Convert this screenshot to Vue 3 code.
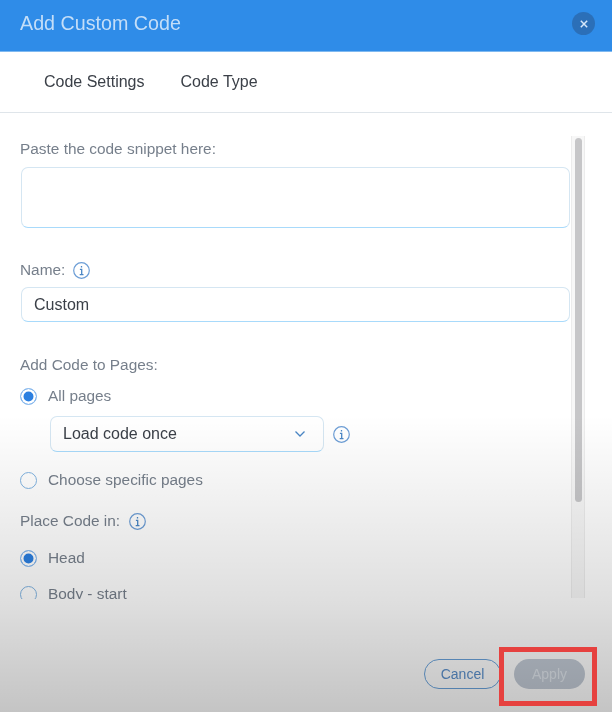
<script setup>
const infoPath = 'M8.5 3.9v1.7M6.9 7.4h1.8v5M6.7 12.6h3.8'
</script>

<template>
  <div class="dialog">
    <header class="head">
      <h1>Add Custom Code</h1>
      <button class="close" aria-label="Close">
        <svg width="10" height="10" viewBox="0 0 10 10"><path d="M1.800 1.800l6.400 6.400M8.200 1.800l-6.400 6.400" stroke="#d5e7fa" stroke-width="1.500" fill="none" /></svg>
      </button>
    </header>
    <nav class="tabs">
      <span>Code Settings</span>
      <span>Code Type</span>
    </nav>
    <div class="main">
      <div class="form">
        <label class="lbl first">Paste the code snippet here:</label>
        <div class="field area"></div>

        <div class="lbl name-lbl">
          Name:
          <svg class="info" viewBox="0 0 17 17"><circle cx="8.500" cy="8.500" r="7.800" /><path :d="infoPath" /></svg>
        </div>
        <div class="field input">Custom</div>

        <div class="lbl pages-lbl">Add Code to Pages:</div>
        <div class="radio-row all"><i class="radio on"></i>All pages</div>
        <div class="select-row">
          <div class="field select">
            Load code once
            <svg width="12" height="8" viewBox="0 0 12 8"><path d="M1.500 1.500L6 6l4.500-4.500" stroke="#4a86c5" stroke-width="1.300" fill="none" /></svg>
          </div>
          <svg class="info" viewBox="0 0 17 17"><circle cx="8.500" cy="8.500" r="7.800" /><path :d="infoPath" /></svg>
        </div>
        <div class="radio-row specific"><i class="radio"></i>Choose specific pages</div>

        <div class="lbl place-lbl">
          Place Code in:
          <svg class="info" viewBox="0 0 17 17"><circle cx="8.500" cy="8.500" r="7.800" /><path :d="infoPath" /></svg>
        </div>
        <div class="radio-row head-row"><i class="radio on"></i>Head</div>
        <div class="radio-row body-row"><i class="radio"></i>Body - start</div>
      </div>
      <div class="track"><div class="thumb"></div></div>
    </div>
    <footer class="foot">
      <button class="btn cancel">Cancel</button>
      <button class="btn apply">Apply</button>
    </footer>
    <div class="shade"></div>
    <div class="mark"></div>
  </div>
</template>

<style>
html, body { margin: 0; background: #fff; }
</style>

<style scoped>
.dialog {
  position: relative;
  width: 612px;
  height: 712px;
  display: flex;
  flex-direction: column;
  overflow: hidden;
  background: #fff;
  font-family: "Liberation Sans", Arial, sans-serif;
  font-size: 15.4px;
  color: #767f8b;
}
.head {
  height: 52px;
  flex: none;
  box-sizing: border-box;
  padding: 0 17px 4px 20px;
  display: flex;
  align-items: center;
  justify-content: space-between;
  background: #2f8ce8;
  border-bottom: 1px solid #7fb9f0;
}
h1 {
  margin: 0;
  font-size: 19.7px;
  font-weight: 400;
  color: #c4def8;
  filter: blur(.35px);
}
.close {
  width: 23px;
  height: 23px;
  padding: 0;
  border: 0;
  border-radius: 50%;
  background: #2b6fb8;
  display: flex;
  align-items: center;
  justify-content: center;
  filter: blur(.35px);
}
.tabs {
  height: 61px;
  flex: none;
  box-sizing: border-box;
  padding: 0 0 1px 44px;
  display: flex;
  align-items: center;
  gap: 36px;
  font-size: 16px;
  color: #3b4048;
  border-bottom: 1px solid #dfe5ea;
}
.tabs span { filter: blur(.35px); }
.main {
  flex: none;
  height: 486px;
  display: flex;
  padding: 23px 27px 0 20px;
  box-sizing: border-box;
}
.form {
  flex: 1;
  min-width: 0;
  overflow: hidden;
  filter: blur(.35px);
}
.lbl {
  display: flex;
  align-items: center;
  gap: 8px;
  height: 18px;
  line-height: 18px;
}
.first { margin-top: 4px; }
.field {
  box-sizing: border-box;
  border: 1px solid #d5e6f2;
  border-bottom-color: #a8dafb;
  border-radius: 7px;
  background: #fff;
  font-size: 16px;
  color: #3b4048;
}
.area { height: 61px; margin: 9px 1px 0; }
.name-lbl { margin-top: 33px; }
.input {
  height: 35px;
  margin: 8px 1px 0;
  padding-left: 12px;
  line-height: 33px;
}
.pages-lbl { margin-top: 34px; }
.radio-row {
  display: flex;
  align-items: center;
  gap: 11px;
  height: 18px;
  line-height: 18px;
}
.radio {
  width: 17px;
  height: 17px;
  box-sizing: border-box;
  flex: none;
  border: 1.500px solid #7fb2e0;
  border-radius: 50%;
  background: #fff;
}
.radio.on {
  border-color: #92bfee;
  background: #2b7fe0;
  box-shadow: inset 0 0 0 2.500px #fff;
}
.all { margin-top: 13px; }
.select-row {
  display: flex;
  align-items: center;
  gap: 9px;
  margin: 11px 0 0 30px;
}
.select {
  width: 274px;
  height: 36px;
  padding: 0 17px 0 12px;
  display: flex;
  align-items: center;
  justify-content: space-between;
}
.specific { margin-top: 19px; }
.place-lbl { margin-top: 23px; gap: 9px; }
.head-row { margin-top: 19px; }
.body-row { margin-top: 18px; }
.info {
  width: 17px;
  height: 17px;
  flex: none;
}
.info circle {
  fill: none;
  stroke: #6d9ed6;
  stroke-width: 1.200;
}
.info path {
  fill: none;
  stroke: #4a86c5;
  stroke-width: 1.300;
}
.track {
  width: 14px;
  flex: none;
  height: 462px;
  box-sizing: border-box;
  padding: 2px 2px 0 3px;
  background: #f7f7f7;
  border-left: 1px solid #ececec;
  border-right: 1px solid #ececec;
}
.thumb {
  width: 7px;
  height: 364px;
  border-radius: 4px;
  background: #c6c6c8;
}
.foot {
  flex: 1;
  display: flex;
  justify-content: flex-end;
  gap: 13px;
  padding: 60px 27px 0 0;
  box-sizing: border-box;
}
.btn {
  height: 30px;
  border-radius: 15px;
  font: 14px "Liberation Sans", Arial, sans-serif;
  padding: 0;
  filter: blur(.35px);
}
.cancel {
  width: 77px;
  background: rgba(255,255,255,.55);
  border: 1px solid #6aa3dc;
  color: #5b90cc;
}
.apply {
  width: 71px;
  background: #c2cad5;
  border: 0;
  color: #dfe5ec;
}
.shade {
  position: absolute;
  left: 0;
  right: 0;
  top: 415px;
  bottom: 0;
  background: linear-gradient(to bottom, rgba(0,0,0,0), rgba(0,0,0,.045) 22%, rgba(0,0,0,.125) 62%, rgba(0,0,0,.23));
  pointer-events: none;
}
.mark {
  position: absolute;
  left: 499px;
  top: 647px;
  width: 98px;
  height: 59px;
  box-sizing: border-box;
  border: 5px solid #e6413f;
}
</style>
